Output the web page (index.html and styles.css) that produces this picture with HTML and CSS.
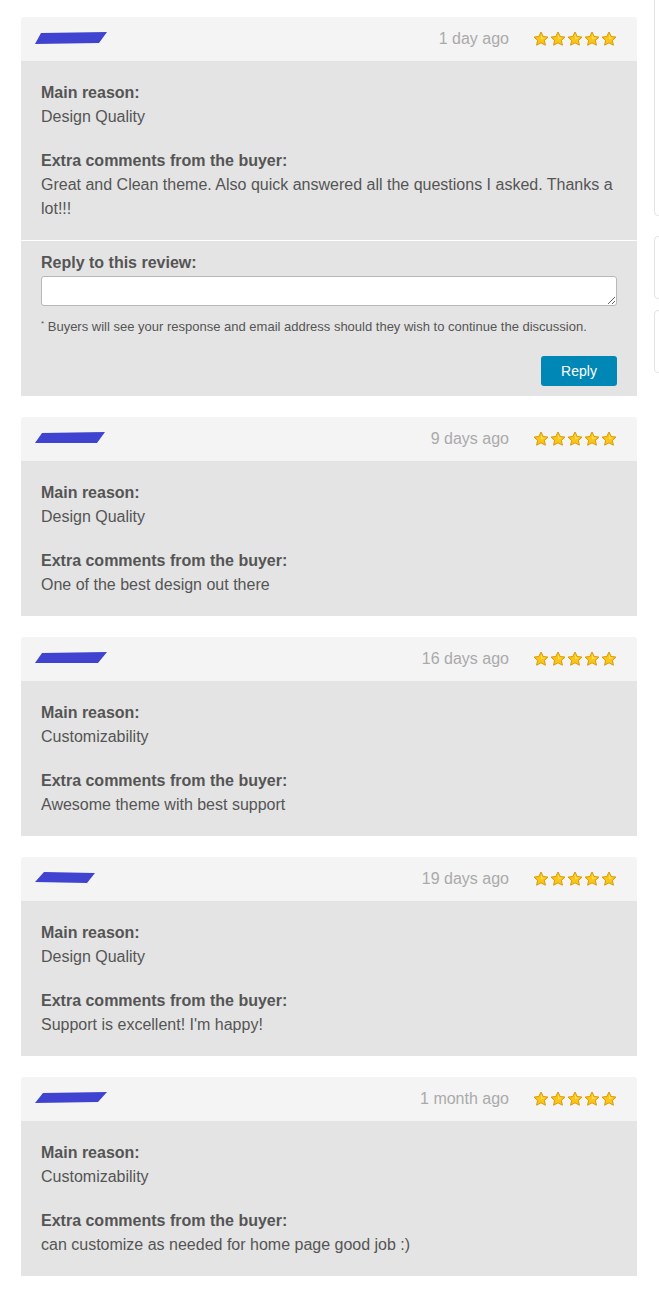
FILE: index.html
```html
<!DOCTYPE html>
<html>
<head>
<meta charset="utf-8">
<link rel="stylesheet" href="styles.css">
</head>
<body>
<svg class="defs" width="0" height="0">
  <defs>
    <symbol id="star" viewBox="0 0 16 16">
      <path d="M8 1 L10.2 5.5 L15 6.1 L11.4 9.4 L12.4 14.2 L8 11.8 L3.6 14.2 L4.6 9.4 L1 6.1 L5.8 5.5 Z" fill="#fbc516" stroke="#d99a06" stroke-width="1" stroke-linejoin="round"/>
      <path d="M8 3 L9.4 6.4 L12.6 6.8 L8 8.5 Z" fill="#ffe680" opacity="0.7"/>
    </symbol>
  </defs>
</svg>
<div class="page">
  <main class="reviews">
    <article class="review">
      <header class="review-head">
        <svg class="user" width="72" height="14" viewBox="0 0 72 14"><polygon points="6,2 72,1 64,12 0,13" fill="#3f43cf"/></svg>
        <div class="meta">
          <span class="date">1 day ago</span>
          <span class="stars"><svg><use href="#star"/></svg><svg><use href="#star"/></svg><svg><use href="#star"/></svg><svg><use href="#star"/></svg><svg><use href="#star"/></svg></span>
        </div>
      </header>
      <div class="review-body">
        <p><strong>Main reason:</strong><br>Design Quality</p>
        <p><strong>Extra comments from the buyer:</strong><br>Great and Clean theme. Also quick answered all the questions I asked. Thanks a lot!!!</p>
      </div>
      <form class="reply">
        <label class="reply-label">Reply to this review:</label>
        <textarea class="reply-input"></textarea>
        <p class="note"><sup>*</sup> Buyers will see your response and email address should they wish to continue the discussion.</p>
        <div class="actions"><button type="button" class="btn">Reply</button></div>
      </form>
    </article>

    <article class="review">
      <header class="review-head">
        <svg class="user" width="70" height="14" viewBox="0 0 70 14"><polygon points="7,2 70,1 62,12 0,12" fill="#3f43cf"/></svg>
        <div class="meta">
          <span class="date">9 days ago</span>
          <span class="stars"><svg><use href="#star"/></svg><svg><use href="#star"/></svg><svg><use href="#star"/></svg><svg><use href="#star"/></svg><svg><use href="#star"/></svg></span>
        </div>
      </header>
      <div class="review-body">
        <p><strong>Main reason:</strong><br>Design Quality</p>
        <p><strong>Extra comments from the buyer:</strong><br>One of the best design out there</p>
      </div>
    </article>

    <article class="review">
      <header class="review-head">
        <svg class="user" width="72" height="14" viewBox="0 0 72 14"><polygon points="7,2 72,1 63,12 0,12" fill="#3f43cf"/></svg>
        <div class="meta">
          <span class="date">16 days ago</span>
          <span class="stars"><svg><use href="#star"/></svg><svg><use href="#star"/></svg><svg><use href="#star"/></svg><svg><use href="#star"/></svg><svg><use href="#star"/></svg></span>
        </div>
      </header>
      <div class="review-body">
        <p><strong>Main reason:</strong><br>Customizability</p>
        <p><strong>Extra comments from the buyer:</strong><br>Awesome theme with best support</p>
      </div>
    </article>

    <article class="review">
      <header class="review-head">
        <svg class="user" width="60" height="14" viewBox="0 0 60 14"><polygon points="9,1 60,2 52,12 0,11" fill="#3f43cf"/></svg>
        <div class="meta">
          <span class="date">19 days ago</span>
          <span class="stars"><svg><use href="#star"/></svg><svg><use href="#star"/></svg><svg><use href="#star"/></svg><svg><use href="#star"/></svg><svg><use href="#star"/></svg></span>
        </div>
      </header>
      <div class="review-body">
        <p><strong>Main reason:</strong><br>Design Quality</p>
        <p><strong>Extra comments from the buyer:</strong><br>Support is excellent! I'm happy!</p>
      </div>
    </article>

    <article class="review">
      <header class="review-head">
        <svg class="user" width="72" height="14" viewBox="0 0 72 14"><polygon points="8,2 72,1 63,11 0,12" fill="#3f43cf"/></svg>
        <div class="meta">
          <span class="date">1 month ago</span>
          <span class="stars"><svg><use href="#star"/></svg><svg><use href="#star"/></svg><svg><use href="#star"/></svg><svg><use href="#star"/></svg><svg><use href="#star"/></svg></span>
        </div>
      </header>
      <div class="review-body">
        <p><strong>Main reason:</strong><br>Customizability</p>
        <p><strong>Extra comments from the buyer:</strong><br>can customize as needed for home page good job :)</p>
      </div>
    </article>
  </main>
  <aside class="side">
    <div class="side-box side-box-1"></div>
    <div class="side-box side-box-2"></div>
    <div class="side-box side-box-3"></div>
  </aside>
</div>
</body>
</html>
```

FILE: styles.css
```css
* { box-sizing: border-box; }
html, body { margin: 0; padding: 0; background: #fff; overflow: hidden; }
body {
  font-family: "Liberation Sans", Arial, sans-serif;
  color: #555;
  font-size: 16px;
  line-height: 24px;
}
.defs { position: absolute; width: 0; height: 0; }
.page {
  display: flex;
  gap: 17px;
  padding-left: 21px;
  width: 659px;
  overflow: hidden;
}
.reviews {
  width: 616px;
  flex: none;
  padding-top: 17px;
}
.review {
  margin-bottom: 21px;
}
.review-head {
  height: 44px;
  background: #f4f4f4;
  border-radius: 3px 3px 0 0;
  display: flex;
  align-items: center;
  justify-content: space-between;
  padding: 0 20px 0 14px;
}
.user { display: block; margin-top: -2px; }
.meta {
  display: flex;
  align-items: center;
  gap: 24px;
}
.date { color: #aaa; }
.stars { display: flex; gap: 1px; }
.stars svg { width: 16px; height: 16px; display: block; }
.review-body {
  background: #e4e4e4;
  padding: 20px 20px 19px;
}
.review-body p { margin: 0 0 20px; }
.review-body p:last-child { margin-bottom: 0; }
.review-body strong { font-weight: bold; }
.reply {
  background: #e4e4e4;
  border-top: 1px solid #fff;
  padding: 10px 20px 10px;
  margin: 0;
}
.reply-label {
  display: block;
  font-weight: bold;
}
.reply-input {
  display: block;
  width: 576px;
  height: 30px;
  margin: 1px 0 0;
  border: 1px solid #b8b8b8;
  border-radius: 3px;
  background: #fff;
  resize: vertical;
  font: inherit;
}
.note {
  margin: 12px 0 0;
  font-size: 13px;
  line-height: 18px;
  color: #555;
}
.note sup { font-size: 8px; line-height: 0; vertical-align: 5px; }
.actions {
  display: flex;
  justify-content: flex-end;
  margin-top: 20px;
}
.btn {
  width: 76px;
  height: 30px;
  border: none;
  border-radius: 3px;
  background: #0087b6;
  color: #fff;
  font-family: "Liberation Sans", Arial, sans-serif;
  font-size: 14px;
  padding: 0;
}
.side {
  width: 30px;
  flex: none;
  display: flex;
  flex-direction: column;
}
.side-box {
  border: 1px solid #e4e4e4;
  border-radius: 4px;
  background: #fff;
}
.side-box-1 { height: 226px; margin-top: -10px; }
.side-box-2 { height: 63px; margin-top: 20px; }
.side-box-3 { height: 63px; margin-top: 11px; }
```
